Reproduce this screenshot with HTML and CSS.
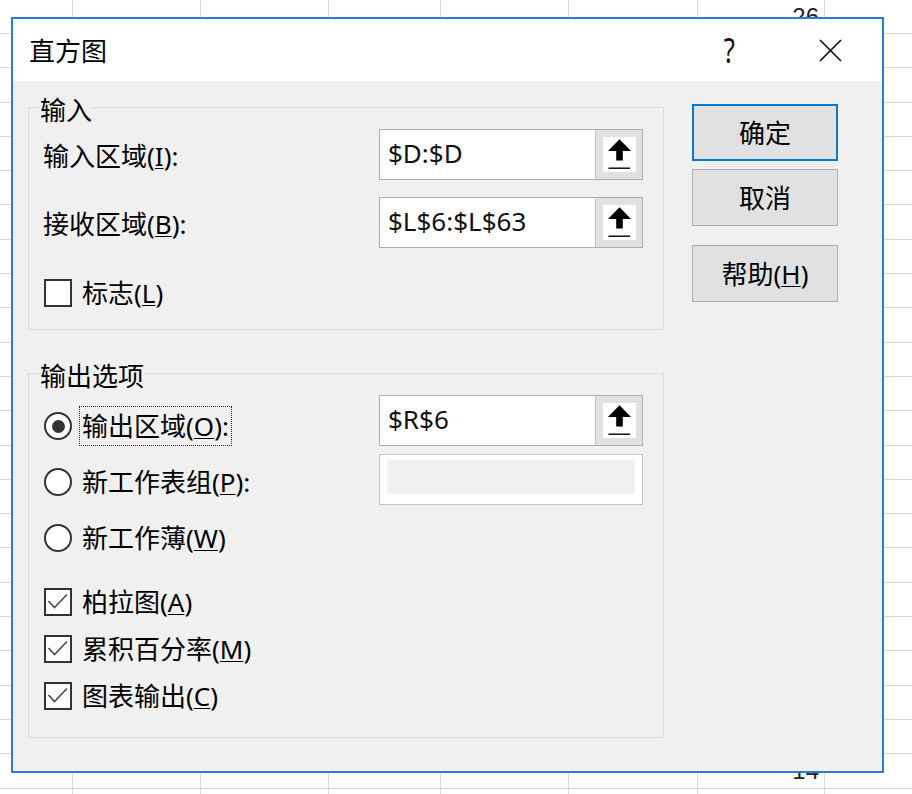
FILE: index.html
```html
<!DOCTYPE html>
<html lang="zh-CN">
<head>
<meta charset="utf-8">
<title>直方图</title>
<link rel="stylesheet" href="styles.css">
</head>
<body>
<div class="desktop">
  <div class="sheet">
    <div class="col w73"></div>
    <div class="col w128"></div>
    <div class="col w128"></div>
    <div class="col w112"></div>
    <div class="col w128"></div>
    <div class="col w129"></div>
    <div class="col w127 numcol">
      <div class="cell cell-top">26</div>
      <div class="cell cell-bottom">14</div>
    </div>
    <div class="col rest"></div>
  </div>

  <div class="dialog">
    <div class="titlebar">
      <div class="title">直方图</div>
      <div class="tb-spacer"></div>
      <div class="tb-btn"><span class="help">?</span></div>
      <div class="tb-btn">
        <svg width="23" height="23" viewBox="0 0 23 23"><path d="M1 1 L22 22 M22 1 L1 22" stroke="#111" stroke-width="1.7" fill="none"/></svg>
      </div>
    </div>

    <div class="body">
      <div class="main">
        <div class="group g1">
          <div class="group-title">输入</div>
          <div class="field first">
            <span class="lbl">输入区域(<u>I</u>):</span>
            <div class="ref">
              <div class="ref-text">$D:$D</div>
              <div class="ref-btn"><div class="ref-sq"><svg width="33" height="35" viewBox="0 0 33 35"><path d="M16.5 2.3 L28 14 L19.8 14 L19.8 23.5 L13.2 23.5 L13.2 14 L5 14 Z" fill="#000"/><rect x="5.5" y="30.5" width="21.5" height="1.4" fill="#000"/></svg></div></div>
            </div>
          </div>
          <div class="field second">
            <span class="lbl">接收区域(<u>B</u>):</span>
            <div class="ref">
              <div class="ref-text">$L$6:$L$63</div>
              <div class="ref-btn"><div class="ref-sq"><svg width="33" height="35" viewBox="0 0 33 35"><path d="M16.5 2.3 L28 14 L19.8 14 L19.8 23.5 L13.2 23.5 L13.2 14 L5 14 Z" fill="#000"/><rect x="5.5" y="30.5" width="21.5" height="1.4" fill="#000"/></svg></div></div>
            </div>
          </div>
          <div class="opt check-flag">
            <span class="box"></span>
            <span class="opt-lbl">标志(<u>L</u>)</span>
          </div>
        </div>

        <div class="group g2">
          <div class="group-title">输出选项</div>
          <div class="out-row">
            <div class="radios">
              <div class="opt radio-row">
                <span class="radio on"></span>
                <span class="opt-lbl focus">输出区域(<u>O</u>):</span>
              </div>
              <div class="opt radio-row">
                <span class="radio"></span>
                <span class="opt-lbl">新工作表组(<u>P</u>):</span>
              </div>
              <div class="opt radio-row">
                <span class="radio"></span>
                <span class="opt-lbl">新工作薄(<u>W</u>)</span>
              </div>
            </div>
            <div class="refs">
              <div class="ref">
                <div class="ref-text">$R$6</div>
                <div class="ref-btn"><div class="ref-sq"><svg width="33" height="35" viewBox="0 0 33 35"><path d="M16.5 2.3 L28 14 L19.8 14 L19.8 23.5 L13.2 23.5 L13.2 14 L5 14 Z" fill="#000"/><rect x="5.5" y="30.5" width="21.5" height="1.4" fill="#000"/></svg></div></div>
              </div>
              <div class="ref disabled"><div class="fill"></div></div>
            </div>
          </div>
          <div class="checks">
            <div class="opt check-row">
              <span class="box"><svg width="24" height="24" viewBox="0 0 24 24"><path d="M2.5 11 L8.5 17.5 L21 4.5" stroke="#4a4a4a" stroke-width="1.6" fill="none"/></svg></span>
              <span class="opt-lbl">柏拉图(<u>A</u>)</span>
            </div>
            <div class="opt check-row">
              <span class="box"><svg width="24" height="24" viewBox="0 0 24 24"><path d="M2.5 11 L8.5 17.5 L21 4.5" stroke="#4a4a4a" stroke-width="1.6" fill="none"/></svg></span>
              <span class="opt-lbl">累积百分率(<u>M</u>)</span>
            </div>
            <div class="opt check-row">
              <span class="box"><svg width="24" height="24" viewBox="0 0 24 24"><path d="M2.5 11 L8.5 17.5 L21 4.5" stroke="#4a4a4a" stroke-width="1.6" fill="none"/></svg></span>
              <span class="opt-lbl">图表输出(<u>C</u>)</span>
            </div>
          </div>
        </div>
      </div>

      <div class="buttons">
        <div class="btn default">确定</div>
        <div class="btn cancel">取消</div>
        <div class="btn help-btn">帮助(<u>H</u>)</div>
      </div>
    </div>
  </div>
</div>
</body>
</html>
```

FILE: styles.css
```css
html, body {
  margin: 0;
  padding: 0;
  width: 912px;
  height: 794px;
  overflow: hidden;
  background: #fff;
}

.desktop {
  position: relative;
  width: 912px;
  height: 794px;
}

/* spreadsheet behind the dialog */
.sheet {
  display: flex;
  height: 794px;
  background-image: repeating-linear-gradient(to bottom,
    transparent 0px, transparent 33px,
    #d6d6d6 33px, #d6d6d6 34px,
    transparent 34px, transparent 34.3px);
}

.col {
  box-sizing: border-box;
  height: 100%;
  border-right: 1px solid #d6d6d6;
  flex: none;
}
.w73 { width: 73px; }
.w128 { width: 128px; }
.w112 { width: 112px; }
.w129 { width: 129px; }
.w127 { width: 127px; }
.rest { flex: 1; border-right: none; }

.numcol {
  display: flex;
  flex-direction: column;
  align-items: stretch;
}
.cell {
  font-family: "Liberation Sans", Arial, sans-serif;
  font-size: 24px;
  color: #222;
  text-align: right;
  padding-right: 5px;
}
.cell-top {
  height: 33px;
  line-height: 33px;
}
.cell-bottom {
  margin-top: 721px;
  height: 34px;
  line-height: 34px;
}

/* dialog window */
.dialog {
  position: absolute;
  left: 11px;
  top: 17px;
  width: 873px;
  height: 756px;
  box-sizing: border-box;
  border: 2px solid #2b7cd3;
  background: #f0f0f0;
  display: flex;
  flex-direction: column;
  font-family: "Noto Sans", "Noto Sans CJK SC", sans-serif;
  font-size: 26px;
  color: #000;
}

.titlebar {
  height: 62px;
  flex: none;
  background: #fff;
  display: flex;
  align-items: center;
  padding-left: 16px;
  padding-right: 22px;
}
.title {
  font-family: "Noto Sans CJK SC", sans-serif;
  font-size: 26px;
  line-height: 30px;
}
.tb-spacer { flex: 1; }
.tb-btn {
  width: 60px;
  height: 40px;
  display: flex;
  align-items: center;
  justify-content: center;
}
.tb-btn + .tb-btn { margin-left: 41px; }
.help {
  font-family: "Noto Sans", sans-serif;
  font-weight: 400;
  font-size: 34px;
  line-height: 40px;
  display: inline-block;
  transform: scaleX(0.75);
  color: #111;
}

.body {
  flex: 1;
  display: flex;
  padding-left: 15px;
}

.main {
  width: 636px;
  padding-top: 26px;
}

.group {
  box-sizing: border-box;
  border: 1px solid #dcdcdc;
}
.g2 { margin-top: 43px; }

.group-title {
  width: fit-content;
  margin-top: -14px;
  margin-left: 11px;
  height: 30px;
  line-height: 30px;
  background: #f0f0f0;
  font-family: "Noto Sans CJK SC", sans-serif;
}

.g1 { padding-bottom: 22px; }

.field {
  display: flex;
  align-items: center;
  justify-content: space-between;
  height: 51px;
  padding: 0 20px 0 14px;
}
.field.first { margin-top: 5px; }
.field.second { margin-top: 17px; }

.lbl {
  line-height: 30px;
  padding-top: 3px;
}

.ref {
  box-sizing: border-box;
  width: 264px;
  height: 51px;
  border: 1px solid #adadad;
  background: #fff;
  display: flex;
}
.ref-text {
  flex: 1;
  padding-left: 8px;
  line-height: 47px;
  font-family: "Noto Sans", "Open Sans", sans-serif;
  font-size: 26px;
  color: #111;
}
.ref-btn {
  width: 47px;
  box-sizing: border-box;
  border-left: 1px solid #c2c2c2;
  background: #e1e1e1;
  display: flex;
  align-items: center;
  justify-content: center;
}
.ref-sq {
  width: 33px;
  height: 35px;
  background: #fff;
  display: flex;
}

.ref.disabled {
  border-color: #c4c4c4;
  padding: 5px 7px 10px 7px;
}
.fill {
  flex: 1;
  background: #f0f0f0;
}

/* radio and check options */
.opt {
  display: flex;
  align-items: center;
  padding-left: 15px;
}
.check-flag {
  height: 28px;
  margin-top: 31px;
}

.box {
  box-sizing: border-box;
  width: 28px;
  height: 28px;
  border: 2px solid #333;
  background: #fff;
  display: flex;
  align-items: center;
  justify-content: center;
  flex: none;
}
.radio {
  box-sizing: border-box;
  width: 28px;
  height: 28px;
  border: 2px solid #333;
  border-radius: 50%;
  background: #fff;
  display: flex;
  align-items: center;
  justify-content: center;
  flex: none;
}
.radio.on::after {
  content: "";
  width: 13px;
  height: 13px;
  border-radius: 50%;
  background: #333;
}

.opt-lbl {
  margin-left: 7px;
  padding: 2px 2px 0 2px;
  height: 36px;
  line-height: 34px;
  border: 1px dotted transparent;
}
.opt-lbl.focus {
  border-color: #222;
}

.out-row {
  display: flex;
  padding-right: 20px;
}
.radios {
  flex: 1;
  margin-top: 8px;
}
.radio-row {
  height: 56px;
}
.refs {
  margin-top: 5px;
  display: flex;
  flex-direction: column;
  gap: 8px;
}

.checks {
  margin-top: 12px;
  padding-bottom: 18px;
}
.check-row {
  height: 47px;
}

/* command buttons */
.buttons {
  margin-left: 28px;
  padding-top: 23px;
  width: 146px;
  display: flex;
  flex-direction: column;
}
.btn {
  box-sizing: border-box;
  height: 57px;
  border: 1px solid #adadad;
  background: #e1e1e1;
  display: flex;
  align-items: center;
  justify-content: center;
  line-height: 30px;
}
.btn.default {
  border: 2px solid #0078d7;
}
.btn.cancel { margin-top: 8px; }
.btn.help-btn { margin-top: 19px; }

u {
  text-decoration-thickness: 1px;
  text-underline-offset: 2px;
}
```
